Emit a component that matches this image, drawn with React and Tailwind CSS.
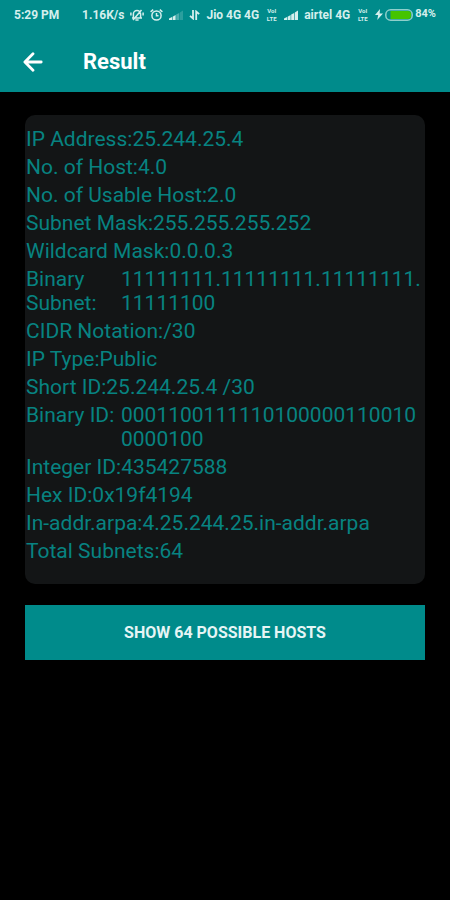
const rows = [
  { label: "IP Address:", value: "25.244.25.4" },
  { label: "No. of Host:", value: "4.0" },
  { label: "No. of Usable Host:", value: "2.0" },
  { label: "Subnet Mask:", value: "255.255.255.252" },
  { label: "Wildcard Mask:", value: "0.0.0.3" },
  { label: "Binary Subnet:", value: "11111111.11111111.11111111.11111100", wide: true },
  { label: "CIDR Notation:", value: "/30" },
  { label: "IP Type:", value: "Public" },
  { label: "Short ID:", value: "25.244.25.4 /30" },
  { label: "Binary ID:", value: "00011001111101000001100100000100", wide: true },
  { label: "Integer ID:", value: "435427588" },
  { label: "Hex ID:", value: "0x19f4194" },
  { label: "In-addr.arpa:", value: "4.25.244.25.in-addr.arpa" },
  { label: "Total Subnets:", value: "64" },
];

function BackIcon() {
  return (
    <svg className="w-5 h-5" viewBox="0 0 20 20" fill="none" stroke="currentColor" strokeWidth="2.8" strokeLinecap="round" strokeLinejoin="round">
      <path d="M18.2 10H2.5M10 1.8 1.9 10l8.1 8.2" />
    </svg>
  );
}

function SilentIcon() {
  return (
    <svg className="w-[14px] h-[12px]" viewBox="0 0 14 12" fill="none" stroke="currentColor" strokeWidth="1.5">
      <path d="M3.4 8.4V5a3.6 3.6 0 0 1 7.2 0v3.4M2 8.9h10M5.4 10.9h3.2M.9 3.5v3M13.1 3.5v3M3 11 11.5 1" />
    </svg>
  );
}

function AlarmIcon() {
  return (
    <svg className="w-[13px] h-[12px]" viewBox="0 0 13 12" fill="none" stroke="currentColor" strokeWidth="1.5">
      <circle cx="6.5" cy="6.5" r="4.6" />
      <path d="M6.5 4v2.7h2M.6 2.8 3.2.7M12.4 2.8 9.8.7" />
    </svg>
  );
}

function SignalIcon({ level }) {
  return (
    <svg className="w-[14px] h-[10px]" viewBox="0 0 14 10" fill="currentColor">
      <path d="M0 10V8.5L3 7v3z" />
      <path d="M3.6 10V6.7l3-1.6V10z" />
      <path d="M7.2 10V4.6l3-1.7V10z" opacity={level > 2 ? 1 : 0.35} />
      <path d="M10.8 10V2.5L14 .5V10z" opacity={level > 3 ? 1 : 0.2} />
    </svg>
  );
}

function DataIcon() {
  return (
    <svg className="w-[11px] h-[10px]" viewBox="0 0 11 10" fill="none" stroke="currentColor" strokeWidth="1.8">
      <path d="M4 0v8.5L1 5.8M7.2 10V1.5l3 2.7" />
    </svg>
  );
}

function VolteIcon() {
  return (
    <span className="flex flex-col items-center w-[13px] text-[6px] leading-[8px]">
      <span>VoI</span>
      <span>LTE</span>
    </span>
  );
}

function StatusBar() {
  return (
    <div className="flex items-center h-[29px] px-[14px] text-[12px] font-bold text-[#d5efed] whitespace-nowrap">
      <span className="mr-auto">5:29 PM</span>
      <div className="flex items-center gap-[6px]">
        <span>1.16K/s</span>
        <SilentIcon />
        <AlarmIcon />
        <SignalIcon level={2} />
        <DataIcon />
        <span>Jio 4G 4G</span>
        <VolteIcon />
        <SignalIcon level={4} />
        <span>airtel 4G</span>
        <VolteIcon />
        <div className="flex items-center gap-[2px]">
          <svg className="w-[8px] h-[11px]" viewBox="0 0 8 11" fill="currentColor">
            <path d="M5 0 0 6h3.2l-1 5L8 4.5H4.6z" />
          </svg>
          <svg className="w-[28px] h-[12px]" viewBox="0 0 28 12">
            <rect x=".8" y=".8" width="26.4" height="10.4" rx="4.8" fill="none" stroke="#8fcfcb" strokeWidth="1.5" />
            <path d="M5.5 2H23a3 3 0 0 1 3 3v2a3 3 0 0 1-3 3H5.5z" fill="#45c400" />
          </svg>
          <span className="text-[11px]">84%</span>
        </div>
      </div>
    </div>
  );
}

export default function App() {
  return (
    <div className="min-h-screen bg-black font-['Roboto',sans-serif]">
      <header className="bg-[#008b8b] text-white">
        <StatusBar />
        <div className="flex items-center h-[63px] pt-0.5 pl-[23px]">
          <button type="button" aria-label="Back" className="flex w-[60px]">
            <BackIcon />
          </button>
          <h1 className="text-[22px] font-bold">Result</h1>
        </div>
      </header>

      <main className="px-[25px] pt-[23px]">
        <section className="flex flex-col gap-1 rounded-[10px] bg-[#131516] pt-3 pb-[21px] pl-px text-[21px] leading-6 text-[#078381]">
          {rows.map((row) =>
            row.wide ? (
              <div key={row.label} className="flex">
                <span className="w-[95px] shrink-0">{row.label}</span>
                <span className="min-w-0 flex-1 break-all">{row.value}</span>
              </div>
            ) : (
              <div key={row.label}>
                {row.label}
                {row.value}
              </div>
            )
          )}
        </section>

        <button type="button" className="mt-[21px] h-[55px] w-full bg-[#008b8b] text-[16px] font-bold text-[#e6f5f5]">
          SHOW 64 POSSIBLE HOSTS
        </button>
      </main>
    </div>
  );
}
